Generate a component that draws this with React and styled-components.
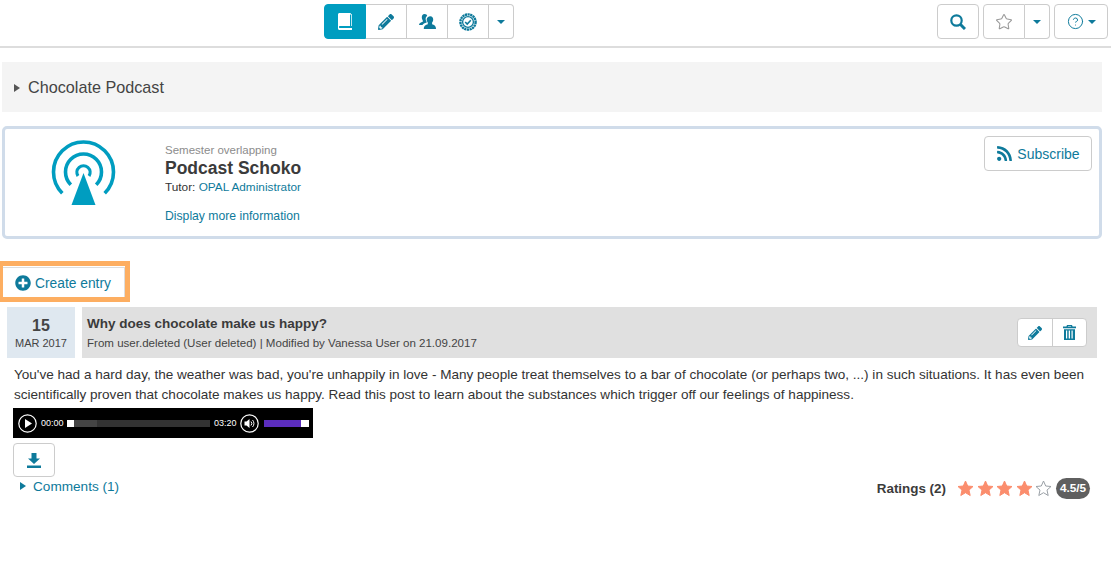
import React from 'react';
import styled, { createGlobalStyle } from 'styled-components';
import { FaPencilAlt, FaRss, FaPlusCircle } from 'react-icons/fa';
import { CircleHelp, Star } from 'lucide-react';

const teal = '#0e7a9b';

const GlobalStyle = createGlobalStyle`
    html, body {
        margin: 0;
        padding: 0;
        background: #fff;
    }
    body {
        font-family: 'Liberation Sans', Arial, sans-serif;
        font-size: 14px;
        color: #333;
    }
`;

const Page = styled.div`
    width: 1111px;
    height: 572px;
    overflow: hidden;
`;

// top toolbar
const TopBar = styled.div`
    height: 42px;
    border-bottom: 2px solid #ddd;
    display: flex;
    padding: 4px 3px 0 324px;
    justify-content: space-between;
    align-items: flex-start;
`;

const Group = styled.div`
    display: flex;
    gap: ${p => p.$gap || 0}px;
`;

const ToolButton = styled.div`
    width: ${p => p.$w || 41}px;
    height: 35px;
    box-sizing: border-box;
    display: flex;
    align-items: center;
    justify-content: center;
    gap: 4px;
    border: 1px solid ${p => (p.$active ? '#009dc0' : '#ccc')};
    border-left-width: ${p => (p.$joined ? 0 : 1)}px;
    border-radius: ${p => p.$radius || '0'};
    background: ${p => (p.$active ? '#009dc0' : '#fff')};
    color: ${p => (p.$active ? '#fff' : teal)};
    font-size: 16px;
`;

const Caret = styled.span`
    width: 0;
    height: 0;
    border-left: 4px solid transparent;
    border-right: 4px solid transparent;
    border-top: 4px solid ${teal};
    margin-top: 1px;
`;

// collapsed course path
const PathBar = styled.div`
    margin: 14px 9px 0 2px;
    height: 50px;
    box-sizing: border-box;
    padding: 1px 0 0 12px;
    background: #f4f4f4;
    display: flex;
    align-items: center;
    gap: 8px;
    font-size: 16.2px;
    color: #444;
`;

const Arrow = styled.span`
    width: 0;
    height: 0;
    border-top: 4px solid transparent;
    border-bottom: 4px solid transparent;
    border-left: 6px solid ${p => p.$color || '#555'};
`;

// podcast card
const Card = styled.div`
    margin: 14px 9px 0 2px;
    height: 113px;
    box-sizing: border-box;
    border: 3px solid #d0dcea;
    border-radius: 5px;
    display: flex;
`;

const CardIcon = styled.div`
    width: 160px;
    padding: 11px 0 0 46px;
    box-sizing: border-box;
    color: #009dc0;
`;

const CardText = styled.div`
    padding-top: 14px;
    display: flex;
    flex-direction: column;
    font-size: 11.8px;
    flex: 1;
`;

const Semester = styled.div`
    font-size: 11.5px;
    color: #8c8c8c;
    line-height: 14px;
`;

const Title = styled.div`
    font-size: 17.5px;
    font-weight: bold;
    line-height: 22px;
    color: #3b3b3b;
`;

const Tutor = styled.div`
    line-height: 16px;
    color: #333;
`;

const Link = styled.a`
    color: ${teal};
    text-decoration: none;
`;

const MoreInfo = styled(Link)`
    margin-top: 14px;
    line-height: 14px;
    font-size: 12.2px;
`;

const Subscribe = styled.div`
    margin: 7px 7px 0 0;
    width: 108px;
    height: 35px;
    box-sizing: border-box;
    border: 1px solid #ccc;
    border-radius: 4px;
    color: ${teal};
    display: flex;
    align-items: center;
    justify-content: center;
    gap: 4px;
    font-size: 14px;
`;

const Highlight = styled.div`
    margin-top: 22px;
    width: 130px;
    height: 41px;
    box-sizing: border-box;
    border: solid #fdae61;
    border-width: 5px 5px 5px 3px;
    background: #fff;
    display: flex;
`;

const CreateButton = styled.div`
    flex: 1;
    margin-top: 1px;
    border: 1px solid #ddd;
    border-left: 0;
    border-bottom: 0;
    display: flex;
    align-items: center;
    padding: 1px 0 0 12px;
    gap: 4px;
    color: ${teal};
    font-size: 13.8px;
`;

const PostHead = styled.div`
    margin: 5px 14px 0 7px;
    display: flex;
    gap: 7px;
    height: 51px;
`;

const DateBox = styled.div`
    width: 68px;
    background: #dfe8f0;
    display: flex;
    flex-direction: column;
    align-items: center;
    padding-top: 9px;
    box-sizing: border-box;
`;

const Day = styled.div`
    font-size: 16px;
    font-weight: bold;
    line-height: 20px;
    color: #444;
`;

const Month = styled.div`
    font-size: 11px;
    line-height: 15px;
    color: #444;
`;

const HeadMain = styled.div`
    flex: 1;
    background: #e0e0e0;
    display: flex;
    justify-content: space-between;
    align-items: center;
    padding: 0 10px 0 5px;
`;

const TitleBlock = styled.div`
    padding-top: 1px;
`;

const PostTitle = styled.div`
    font-size: 13.5px;
    font-weight: bold;
    line-height: 18px;
    color: #3b3b3b;
`;

const PostMeta = styled.div`
    font-size: 11.55px;
    line-height: 18px;
    margin-top: 1px;
    color: #444;
`;

const ActionGroup = styled.div`
    display: flex;
    width: 70px;
    height: 29px;
    box-sizing: border-box;
    border: 1px solid #ccc;
    border-radius: 4px;
    background: #fff;
    color: ${teal};
`;

const Action = styled.div`
    flex: 1;
    display: flex;
    align-items: center;
    justify-content: center;
    font-size: 14px;
    & + & {
        border-left: 1px solid #ccc;
    }
`;

const PostBody = styled.p`
    margin: 7px 14px 0 14px;
    line-height: 20px;
    font-size: 13.55px;
    color: #333;
`;

// mediaelement style audio player
const Player = styled.div`
    margin: 3px 0 0 13px;
    width: 300px;
    height: 30px;
    background: #000;
    display: flex;
    align-items: center;
    padding-left: 5px;
    box-sizing: border-box;
    color: #fff;
    font-size: 9px;
`;

const RoundIcon = styled.svg`
    width: 19px;
    height: 19px;
    display: block;
    flex: none;
`;

const Time = styled.span`
    width: 22.5px;
    margin: 0 3.5px 0 4px;
    line-height: 12px;
`;

const Rail = styled.div`
    width: 143px;
    height: 7px;
    background: #333;
    display: flex;
`;

const RailHandle = styled.div`
    width: 7px;
    background: #fff;
`;

const RailLoaded = styled.div`
    width: 23px;
    background: #444;
`;

const Volume = styled.div`
    margin-left: 5px;
    width: 45px;
    height: 7px;
    background: #5b2dbe;
    display: flex;
    justify-content: flex-end;
`;

const VolumeEnd = styled.div`
    width: 8px;
    background: #fff;
`;

const Download = styled.div`
    margin: 5px 0 0 13px;
    width: 42px;
    height: 34px;
    box-sizing: border-box;
    border: 1px solid #ccc;
    border-radius: 4px;
    color: ${teal};
    display: flex;
    align-items: center;
    justify-content: center;
`;

const Foot = styled.div`
    margin: 0 21px 0 20px;
    display: flex;
    justify-content: space-between;
`;

const Comments = styled.div`
    display: flex;
    align-items: center;
    gap: 7px;
    height: 18px;
    color: ${teal};
    font-size: 13.6px;
`;

const Ratings = styled.div`
    display: flex;
    align-items: center;
    height: 22px;
    font-size: 13.4px;
    font-weight: bold;
    color: #3b3b3b;
`;

const Stars = styled.div`
    display: flex;
    gap: 2.5px;
    margin: 0 4px 0 11px;
`;

const RateStar = styled.svg`
    width: 17px;
    height: 17px;
    display: block;
    fill: ${p => (p.$on ? '#fb8d6d' : '#fff')};
    stroke: ${p => (p.$on ? '#fb8d6d' : '#9aa0a6')};
`;

const Score = styled.div`
    background: #5f5f5f;
    color: #fff;
    border-radius: 11px;
    width: 34px;
    text-align: center;
    height: 21px;
    line-height: 21px;
    font-size: 11.8px;
    font-weight: bold;
`;

const EmptyStar = styled(Star)`
    color: #999;
`;

const BookIcon = () => (
    <svg width="16" height="17" viewBox="0 0 16 17" fill="currentColor">
        <path d="M3 0h11v1h1v12h-1V1.800H4v-.8H3z" opacity=".75" />
        <path d="M1 1.500C1 .7 1.700 0 2.500 0H13v13H3c-.8 0-1 .5-1 1s.2 1 1 1h12v2H2.500C1.700 17 1 16.300 1 15.500z" />
    </svg>
);

const UsersIcon = () => (
    <svg width="17" height="15" viewBox="0 0 17 15" fill="currentColor">
        <path d="M5.500 0C7.300 0 8 1 8.200 1.900 6.900 2.500 6.500 4 6.700 5.500c.1 1 .5 1.800 1 2.400v.7C5.500 9.200 4 10 3.500 11H0c0-1.800 1.800-2.500 3.800-3.200V6.500C3.200 5.800 2.800 4.700 2.800 3.300 2.800 1.300 3.700 0 5.500 0z" />
        <path d="M11.300 2.300c1.900 0 2.900 1.300 2.900 3.200 0 1.300-.5 2.400-1.100 3.100v1.700c2 .7 3.900 1.300 3.900 4.700H4.800c0-3.400 2-4 4-4.700V8.600c-.6-.7-1.100-1.800-1.100-3.100 0-1.900 1.700-3.200 3.600-3.200z" />
    </svg>
);

const BadgeIcon = () => (
    <svg width="18" height="18" viewBox="0 0 18 18">
        <circle cx="9" cy="9" r="7.600" fill="none" stroke="currentColor" strokeWidth="2.400" strokeDasharray="2.200 .5" />
        <circle cx="9" cy="9" r="5.400" fill="none" stroke="currentColor" strokeWidth="1.300" />
        <path d="M6.200 9l2 2 3.600-3.800" fill="none" stroke="currentColor" strokeWidth="1.600" />
    </svg>
);

const SearchIcon = () => (
    <svg width="16" height="16" viewBox="0 0 16 16" fill="none" stroke="currentColor">
        <circle cx="6.500" cy="6.500" r="5.200" strokeWidth="2.200" />
        <path d="M10.500 10.500L15 15" strokeWidth="3" />
    </svg>
);

const TrashIcon = () => (
    <svg width="13" height="15" viewBox="0 0 13 15" fill="currentColor">
        <path d="M4 0h5l.6 1.500H13v1.800H0V1.500h3.400zM4.800 1.500h3.400L8 .9H5z" fillRule="evenodd" />
        <path d="M1 4.200h11V15H1zM3 5.500v8h1.200v-8zm2.700 0v8h1.300v-8zm2.800 0v8h1.200v-8z" fillRule="evenodd" />
    </svg>
);

const DownloadIcon = () => (
    <svg width="14" height="15" viewBox="0 0 14 15" fill="currentColor">
        <path d="M4.500 0h5v5.500H13L7 11 1 5.500h3.500z" />
        <path d="M0 12.500h14V15H0z" />
    </svg>
);

const PodcastIcon = () => (
    <svg width="66" height="66" viewBox="0 0 66 66" fill="none" stroke="currentColor" strokeWidth="3.600">
        <path d="M11.300 53.200 A30 30 0 1 1 53.700 53.200" />
        <path d="M19.800 44.700 A18 18 0 1 1 45.200 44.700" />
        <path d="M27 36 A6.600 6.600 0 1 1 38 36" strokeWidth="3.200" />
        <path d="M32.500 33 L44.500 65 H20.500 Z" fill="currentColor" stroke="none" />
    </svg>
);

const StarShape = ({ on }) => (
    <RateStar viewBox="0 0 17 17" $on={on}>
        <path d="M8.500 1l2.200 5 5.300.5-4 3.600 1.200 5.400-4.700-2.800-4.700 2.800 1.200-5.400-4-3.600 5.300-.5z" />
    </RateStar>
);

const App = () => (
    <Page>
        <GlobalStyle />
        <TopBar>
            <Group>
                <ToolButton $active $w={42} $radius="4px 0 0 4px"><BookIcon /></ToolButton>
                <ToolButton $joined><FaPencilAlt /></ToolButton>
                <ToolButton $joined><UsersIcon /></ToolButton>
                <ToolButton $joined><BadgeIcon /></ToolButton>
                <ToolButton $joined $w={25} $radius="0 4px 4px 0"><Caret /></ToolButton>
            </Group>
            <Group $gap={4}>
                <ToolButton $w={42} $radius="4px"><SearchIcon /></ToolButton>
                <Group>
                    <ToolButton $w={42} $radius="4px 0 0 4px"><EmptyStar size={18} strokeWidth={1.4} /></ToolButton>
                    <ToolButton $joined $w={25} $radius="0 4px 4px 0"><Caret /></ToolButton>
                </Group>
                <ToolButton $w={54} $radius="4px"><CircleHelp size={17} strokeWidth={1.4} /><Caret /></ToolButton>
            </Group>
        </TopBar>

        <PathBar><Arrow />Chocolate Podcast</PathBar>

        <Card>
            <CardIcon><PodcastIcon /></CardIcon>
            <CardText>
                <Semester>Semester overlapping</Semester>
                <Title>Podcast Schoko</Title>
                <Tutor>Tutor: <Link>OPAL Administrator</Link></Tutor>
                <MoreInfo>Display more information</MoreInfo>
            </CardText>
            <Subscribe><FaRss size={17} />Subscribe</Subscribe>
        </Card>

        <Highlight>
            <CreateButton><FaPlusCircle size={16} />Create entry</CreateButton>
        </Highlight>

        <PostHead>
            <DateBox>
                <Day>15</Day>
                <Month>MAR 2017</Month>
            </DateBox>
            <HeadMain>
                <TitleBlock>
                    <PostTitle>Why does chocolate make us happy?</PostTitle>
                    <PostMeta>From user.deleted (User deleted) | Modified by Vanessa User on 21.09.2017</PostMeta>
                </TitleBlock>
                <ActionGroup>
                    <Action><FaPencilAlt /></Action>
                    <Action><TrashIcon /></Action>
                </ActionGroup>
            </HeadMain>
        </PostHead>

        <PostBody>
            You've had a hard day, the weather was bad, you're unhappily in love - Many people treat themselves to a bar of chocolate (or perhaps two, ...) in such situations. It has even been scientifically proven that chocolate makes us happy. Read this post to learn about the substances which trigger off our feelings of happiness.
        </PostBody>

        <Player>
            <RoundIcon viewBox="0 0 19 19">
                <circle cx="9.500" cy="9.500" r="8.700" fill="none" stroke="#fff" strokeWidth="1.200" />
                <path d="M7 5l7 4.500-7 4.500z" fill="#fff" />
            </RoundIcon>
            <Time>00:00</Time>
            <Rail>
                <RailHandle />
                <RailLoaded />
            </Rail>
            <Time>03:20</Time>
            <RoundIcon viewBox="0 0 19 19">
                <circle cx="9.500" cy="9.500" r="8.700" fill="none" stroke="#fff" strokeWidth="1.200" />
                <path d="M4.500 7.500h2l3-2.500v9l-3-2.500h-2z" fill="#fff" />
                <path d="M11 7.500a3 3 0 0 1 0 4M12.500 6a5 5 0 0 1 0 7" fill="none" stroke="#fff" />
            </RoundIcon>
            <Volume><VolumeEnd /></Volume>
        </Player>

        <Download><DownloadIcon /></Download>

        <Foot>
            <Comments><Arrow $color={teal} />Comments (1)</Comments>
            <Ratings>
                Ratings (2)
                <Stars>
                    <StarShape on />
                    <StarShape on />
                    <StarShape on />
                    <StarShape on />
                    <StarShape />
                </Stars>
                <Score>4.5/5</Score>
            </Ratings>
        </Foot>
    </Page>
);

export default App;
